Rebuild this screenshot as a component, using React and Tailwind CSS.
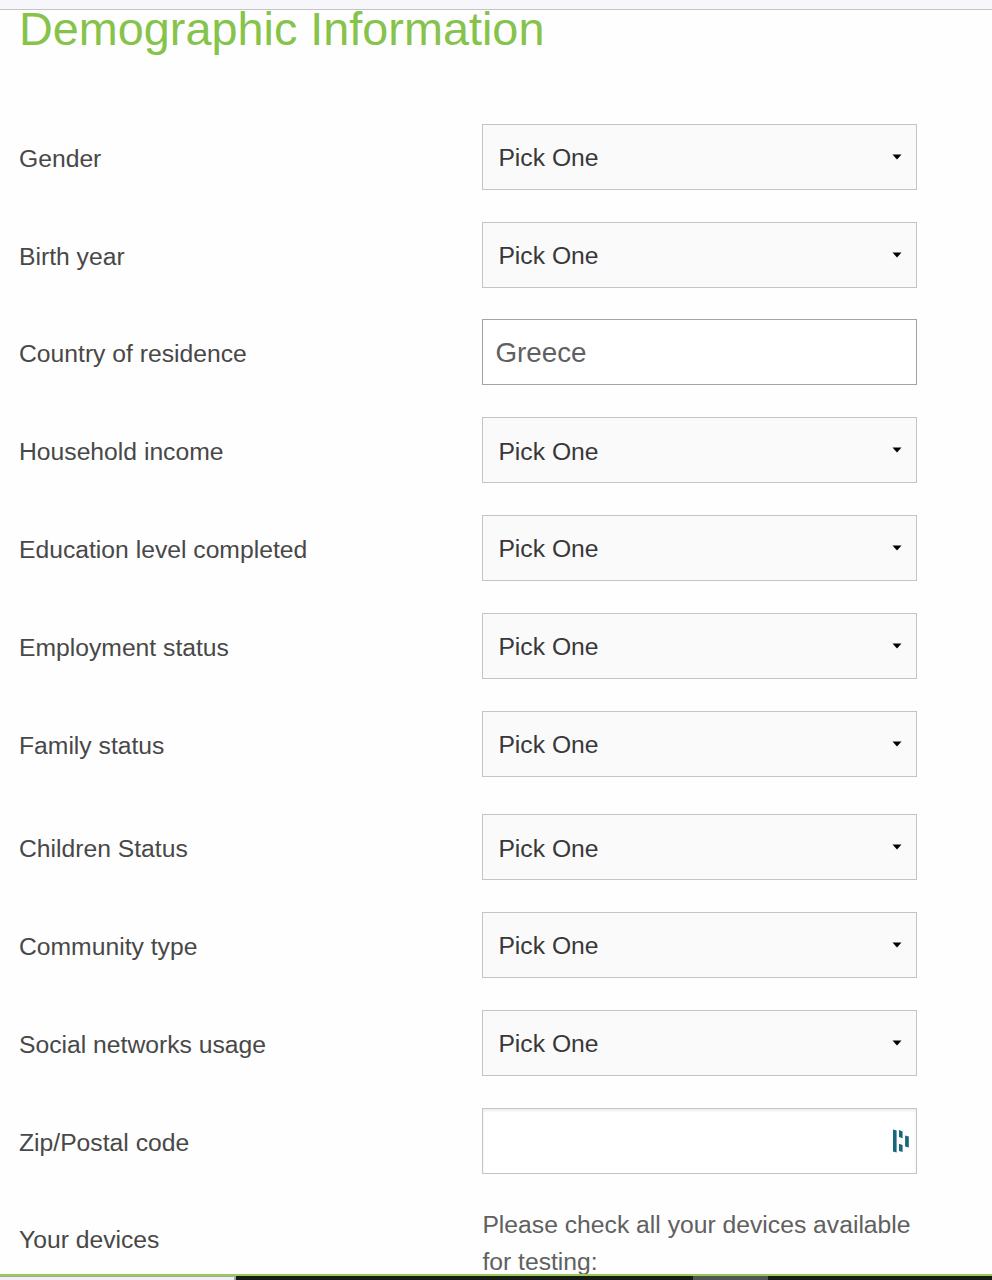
import React, { useState } from 'react';

const fields = [
  { name: 'gender', label: 'Gender', type: 'select' },
  { name: 'birthYear', label: 'Birth year', type: 'select' },
  { name: 'country', label: 'Country of residence', type: 'text' },
  { name: 'income', label: 'Household income', type: 'select' },
  { name: 'education', label: 'Education level completed', type: 'select' },
  { name: 'employment', label: 'Employment status', type: 'select' },
  { name: 'family', label: 'Family status', type: 'select' },
  { name: 'children', label: 'Children Status', type: 'select', spaced: true },
  { name: 'community', label: 'Community type', type: 'select' },
  { name: 'social', label: 'Social networks usage', type: 'select' },
  { name: 'zip', label: 'Zip/Postal code', type: 'zip' },
];

const ManagerIcon = () => (
  <svg width="18" height="24" viewBox="0 0 18 24" fill="#17677a" className="shrink-0">
    <path d="M1 0.4 L4.6 1.4 V23.4 L1 22.6 Z" />
    <path d="M7 1 L10.6 2.4 V9.2 L7 8 Z" />
    <path d="M7 14.8 L10.6 16 V23 L7 22 Z" />
    <path d="M13.1 6.4 L16.8 7.4 V18.6 L13.1 17.4 Z" />
  </svg>
);

const SelectBox = () => (
  <button
    type="button"
    className="flex h-[66px] w-[435px] items-center justify-between border-[1.5px] border-[#c4c4c4] bg-[#fafafa] pl-[15px] pr-[14px] text-[24.7px] text-[#383838]"
  >
    <span className="pt-[2px]">Pick One</span>
    <svg width="10" height="6" viewBox="0 0 10 6" className="shrink-0">
      <path d="M0.5 0.5 H9.5 L5 5.5 Z" fill="#000" />
    </svg>
  </button>
);

export default function App() {
  const [country, setCountry] = useState('Greece');
  const [zip, setZip] = useState('');

  const renderControl = (type) => {
    switch (type) {
      case 'text':
        return (
          <input
            type="text"
            value={country}
            onChange={(e) => setCountry(e.target.value)}
            className="h-[66px] w-[435px] border-[1.5px] border-[#a4a4a4] bg-white px-[12px] pt-[1px] text-[27.8px] text-[#606060]"
          />
        );
      case 'zip':
        return (
          <div className="flex h-[66px] w-[435px] items-center border-[1.5px] border-[#c4c4c4] bg-white pr-[6px] shadow-[inset_0_2px_3px_rgba(0,0,0,0.08)]">
            <input
              type="text"
              value={zip}
              onChange={(e) => setZip(e.target.value)}
              className="min-w-0 flex-1 bg-transparent px-3 outline-none"
            />
            <ManagerIcon />
          </div>
        );
      default:
        return <SelectBox />;
    }
  };

  return (
    <div className="flex h-[1280px] w-[992px] flex-col overflow-hidden bg-[#fefefe] font-['Liberation_Sans',Arial,sans-serif] text-[24.7px] text-[#484848]">
      <div className="h-[10px] shrink-0 border-b-[1.5px] border-[#c4c4c7] bg-[#f7f7fb]" />
      <div className="min-h-0 flex-1 pl-[19px]">
        <h1 className="h-[113.8px] text-[46.8px] leading-[38px] text-[#86c34b]">
          Demographic Information
        </h1>
        <form>
          {fields.map((field) => (
            <div
              key={field.name}
              className={`mb-[31.8px] flex h-[66px] items-center ${field.spaced ? 'mt-[37.6px]' : ''}`}
            >
              <label className="w-[463.4px] shrink-0 pt-[3px]">{field.label}</label>
              {renderControl(field.type)}
            </div>
          ))}
          <div className="flex">
            <span className="w-[463.4px] shrink-0 pt-[15.5px] leading-[37px]">Your devices</span>
            <p className="w-[440px] pt-[0.5px] leading-[37px] text-[#606060]">
              Please check all your devices available for testing:
            </p>
          </div>
        </form>
      </div>
      <div className="flex h-[6px] shrink-0 border-t-2 border-[#9bcb55] bg-[#171b18]">
        <div className="w-[236px] border-r-2 border-t border-[#a5a5a5] bg-[#eef0f3]" />
        <div className="w-[457px]" />
        <div className="w-[75px] bg-[#515553]" />
      </div>
    </div>
  );
}
